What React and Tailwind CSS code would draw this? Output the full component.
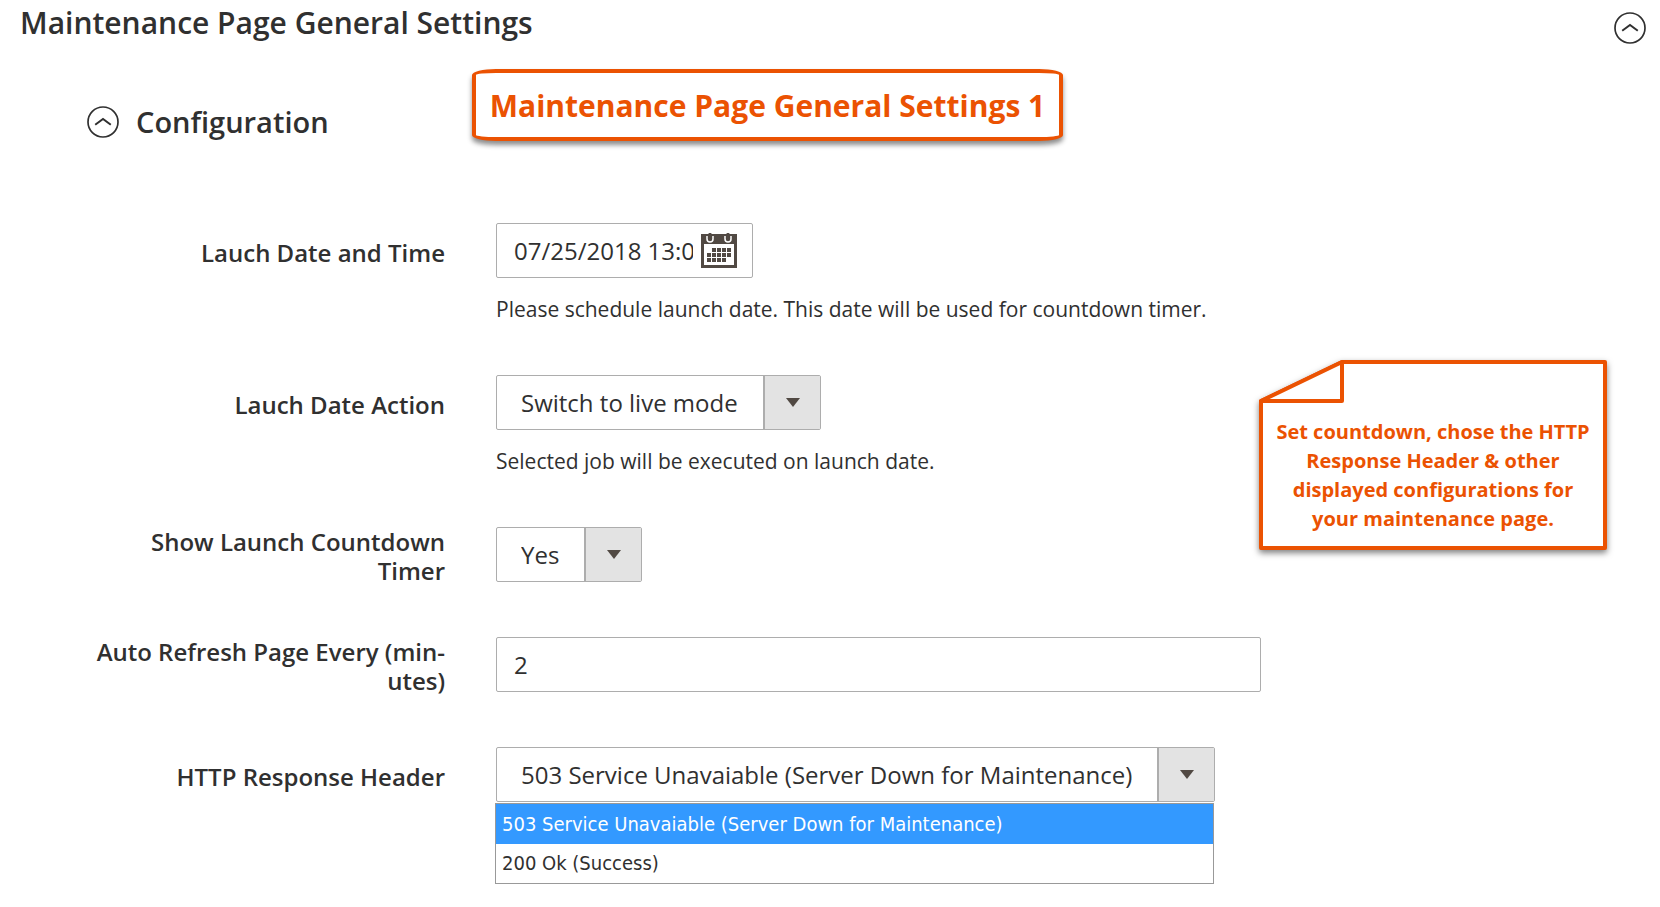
import { useState } from "react";

function CollapseIcon() {
  return (
    <svg className="size-8" viewBox="0 0 32 32" fill="none" stroke="#303030" aria-hidden="true">
      <circle cx="16" cy="16" r="15" strokeWidth="1.7" />
      <path d="M8.2 18.8 16 13l7.8 5.8" strokeWidth="2" />
    </svg>
  );
}

function CalendarIcon() {
  const cells = [
    [1, 0], [2, 0], [3, 0], [4, 0],
    [0, 1], [1, 1], [2, 1], [3, 1], [4, 1],
    [0, 2], [1, 2], [2, 2], [3, 2],
  ];
  return (
    <svg className="h-9 w-9" viewBox="0 0 36 36" aria-hidden="true">
      <path d="M0 1h36v34H0z" fill="#514943" />
      <path d="M3 11h30v21H3z" fill="#fff" />
      <path d="M6 3v3a3 3 0 0 0 6 0V3M24 3v3a3 3 0 0 0 6 0V3" fill="none" stroke="#fff" strokeWidth="1.5" />
      <path d="M9 1v5M27 1v5" stroke="#514943" strokeWidth="3" strokeLinecap="round" />
      {cells.map(([c, r]) => (
        <rect key={`${c}-${r}`} x={6 + c * 5} y={15 + r * 5} width="4" height="4" fill="#514943" />
      ))}
    </svg>
  );
}

function Row({ id, label, tall, help, children }) {
  return (
    <div className="flex gap-[51px]">
      <label
        htmlFor={id}
        className={`w-[445px] shrink-0 pl-[88px] text-right text-2xl leading-[29px] font-semibold ${tall ? "" : "pt-[15px]"}`}
      >
        {label}
      </label>
      <div className="min-w-0 max-w-[765px] flex-1">
        {children}
        {help && <p className="mt-[17px] text-[21px] leading-7">{help}</p>}
      </div>
    </div>
  );
}

function Select({ id, options, width, children }) {
  const [value, setValue] = useState(options[0]);
  return (
    <div className={`relative max-w-full ${width}`}>
      <select
        id={id}
        value={value}
        onChange={(e) => setValue(e.target.value)}
        className="h-[55px] w-full appearance-none rounded-[2px] border border-[#adadad] bg-white pr-[58px] pl-6 text-2xl"
      >
        {options.map((o) => (
          <option key={o}>{o}</option>
        ))}
      </select>
      <span className="pointer-events-none absolute inset-y-px right-px flex w-[57px] items-center justify-center border-l-2 border-[#adadad] bg-[#e3e3e3]">
        <svg className="h-[9px] w-[14px]" viewBox="0 0 14 9" aria-hidden="true">
          <path d="M0 0h14L7 9z" fill="#514943" />
        </svg>
      </span>
      {children}
    </div>
  );
}

const responses = ["503 Service Unavaiable (Server Down for Maintenance)", "200 Ok (Success)"];

export default function App() {
  const [date, setDate] = useState("07/25/2018 13:00");
  const [minutes, setMinutes] = useState("2");
  return (
    <main className="relative min-h-screen bg-white font-['Open_Sans',sans-serif] text-[#303030]">
      <header className="flex items-start justify-between pt-[3px] pr-[14px] pl-5">
        <h1 className="text-[30px] leading-10 font-semibold">Maintenance Page General Settings</h1>
        <button type="button" aria-label="Collapse general settings" className="mt-[9px]">
          <CollapseIcon />
        </button>
      </header>

      <h2 className="mt-[58px] pl-[87px] text-[29px] leading-10 font-semibold">
        <button type="button" className="flex items-center gap-[17px]">
          <CollapseIcon />
          Configuration
        </button>
      </h2>

      <form className="mt-[81px] flex flex-col gap-[52px] pb-12">
        <Row id="launch" label="Lauch Date and Time" help="Please schedule launch date. This date will be used for countdown timer.">
          <div className="flex h-[55px] w-[257px] items-center rounded-[2px] border border-[#adadad] pr-[15px] pl-[17px]">
            <input
              id="launch"
              value={date}
              onChange={(e) => setDate(e.target.value)}
              className="mr-2 min-w-0 flex-1 text-2xl outline-none"
            />
            <button type="button" aria-label="Choose date">
              <CalendarIcon />
            </button>
          </div>
        </Row>
        <Row id="action" label="Lauch Date Action" help="Selected job will be executed on launch date.">
          <Select id="action" width="w-[325px]" options={["Switch to live mode"]} />
        </Row>
        <Row id="countdown" tall label="Show Launch Countdown Timer">
          <Select id="countdown" width="w-[146px]" options={["Yes", "No"]} />
        </Row>
        <Row id="refresh" tall label={<>Auto Refresh Page Every (min&shy;utes)</>}>
          <input
            id="refresh"
            value={minutes}
            onChange={(e) => setMinutes(e.target.value)}
            className="h-[55px] w-full rounded-[2px] border border-[#adadad] px-[17px] text-2xl outline-none"
          />
        </Row>
        <Row id="response" label="HTTP Response Header">
          <Select id="response" width="w-[719px]" options={responses}>
            <ul
              role="listbox"
              aria-label="HTTP Response Header options"
              className="absolute top-full right-px -left-px mt-px border border-[#999] bg-white font-['DejaVu_Sans_Condensed','Open_Sans',sans-serif] text-xl"
            >
              <li role="option" aria-selected="true" className="bg-[#3399ff] px-1.5 leading-10 text-white">
                {responses[0]}
              </li>
              <li role="option" aria-selected="false" className="px-1.5 leading-[39px]">
                {responses[1]}
              </li>
            </ul>
          </Select>
        </Row>
      </form>

      <div className="absolute top-[69px] left-[472px] flex h-[72px] w-[591px] items-center justify-center rounded-[24px/6px] border-4 border-[#eb5202] bg-white text-[30px] font-bold whitespace-nowrap text-[#eb5202] shadow-[0_4px_5px_rgba(0,0,0,0.45)]">
        Maintenance Page General Settings 1
      </div>

      <aside className="absolute top-[360px] left-[1259px] h-[190px] w-[348px] text-[#eb5202]">
        <svg
          className="absolute inset-0 size-full overflow-visible drop-shadow-[0_3px_3px_rgba(0,0,0,0.5)]"
          viewBox="0 0 348 190"
          fill="#fff"
          stroke="#eb5202"
          strokeWidth="4"
          strokeLinejoin="round"
          aria-hidden="true"
        >
          <path d="M2 41 83 2h263v186H2z" />
          <path d="M2 41h81V2z" />
        </svg>
        <p className="relative pt-[57px] text-center text-xl leading-[29px] font-bold whitespace-nowrap">
          Set countdown, chose the HTTP
          <br />
          Response Header &amp; other
          <br />
          displayed configurations for
          <br />
          your maintenance page.
        </p>
      </aside>
    </main>
  );
}
